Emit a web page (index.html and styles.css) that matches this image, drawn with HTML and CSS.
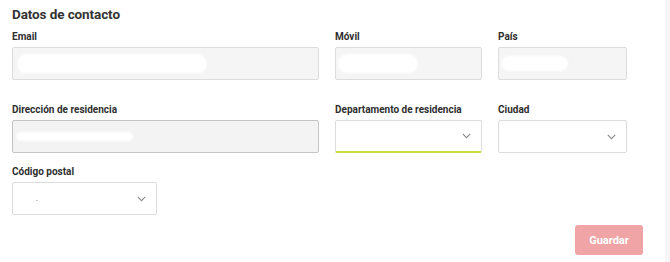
FILE: index.html
```html
<!DOCTYPE html>
<html lang="es">
<head>
<meta charset="utf-8">
<title>Datos de contacto</title>
<link rel="stylesheet" href="styles.css">
</head>
<body>
<div class="page">
  <main class="main">
    <h2 class="title">Datos de contacto</h2>
    <div class="row row1">
      <div class="field f-wide">
        <label class="label">Email</label>
        <div class="input filled"><span class="blob b-email"></span></div>
      </div>
      <div class="field f-mid">
        <label class="label">Móvil</label>
        <div class="input filled"><span class="blob b-movil"></span></div>
      </div>
      <div class="field f-small">
        <label class="label">País</label>
        <div class="input filled"><span class="blob b-pais"></span></div>
      </div>
    </div>
    <div class="row row2">
      <div class="field f-wide">
        <label class="label">Dirección de residencia</label>
        <div class="input filled dark"><span class="blob b-dir"></span></div>
      </div>
      <div class="field f-mid">
        <label class="label">Departamento de residencia</label>
        <div class="input select focus">
          <span class="sel-value"></span>
          <svg class="chev" width="9" height="6" viewBox="0 0 9 6"><path d="M0.8 0.8 L4.5 4.6 L8.2 0.8" fill="none" stroke="#8a8a8a" stroke-width="1.1"/></svg>
        </div>
      </div>
      <div class="field f-small">
        <label class="label">Ciudad</label>
        <div class="input select">
          <span class="sel-value"></span>
          <svg class="chev" width="9" height="6" viewBox="0 0 9 6"><path d="M0.8 0.8 L4.5 4.6 L8.2 0.8" fill="none" stroke="#8a8a8a" stroke-width="1.1"/></svg>
        </div>
      </div>
    </div>
    <div class="row row3">
      <div class="field f-postal">
        <label class="label">Código postal</label>
        <div class="input select">
          <span class="sel-value"><span class="dot"></span></span>
          <svg class="chev" width="9" height="6" viewBox="0 0 9 6"><path d="M0.8 0.8 L4.5 4.6 L8.2 0.8" fill="none" stroke="#8a8a8a" stroke-width="1.1"/></svg>
        </div>
      </div>
    </div>
    <div class="actions">
      <button class="btn" type="button">Guardar</button>
    </div>
  </main>
  <aside class="strip"></aside>
</div>
</body>
</html>
```
FILE: styles.css
```css
* { box-sizing: border-box; }
html, body { margin: 0; padding: 0; background: #fff; }
body { font-family: Roboto, "Liberation Sans", Arial, sans-serif; color: #333; }
.page { display: flex; width: 670px; height: 262px; }
.main { flex: 1; padding: 5px 0 0 12px; }
.strip { width: 5px; background: #f6f6f6; }
.title { margin: 0; font-size: 13.5px; line-height: 18px; font-weight: 700; color: #333; letter-spacing: -0.1px; }
.row { display: flex; gap: 16px; }
.row1 { margin-top: 8px; }
.row2 { margin-top: 24px; }
.row3 { margin-top: 13px; }
.field { display: flex; flex-direction: column; }
.f-wide { width: 307px; }
.f-mid { width: 147px; }
.f-small { width: 129px; }
.f-postal { width: 145px; }
.label { font-size: 10px; line-height: 12px; font-weight: 700; color: #2e2e2e; margin-bottom: 4px; }
.input { height: 33px; border: 1px solid #dcdcdc; border-radius: 2px; background: #fff; display: flex; align-items: center; }
.filled { background: #f5f5f5; }
.dark { border-color: #c4c4c4; background: #f3f3f3; }
.select { justify-content: space-between; padding-right: 10px; }
.focus { border-bottom: 2px solid #c9dc3a; }
.chev { display: block; }
.blob { display: block; background: #fff; border-radius: 10px; filter: blur(1px); }
.b-email { width: 189px; height: 19px; margin-left: 5px; border-radius: 10px 12px 10px 8px; }
.b-movil { width: 80px; height: 19px; margin-left: 2px; }
.b-pais { width: 67px; height: 15px; margin-left: 2px; }
.b-dir { width: 117px; height: 9px; margin-left: 3px; }
.sel-value { display: flex; align-items: center; padding-left: 23px; }
.dot { display: block; width: 2px; height: 1px; background: #c8c8c8; margin-top: 4px; }
.actions { display: flex; justify-content: flex-end; padding-right: 22px; margin-top: 10px; }
.btn { width: 68px; height: 30px; border: 0; border-radius: 3px; background: #f0a4a5; color: #fff; font-family: Roboto, "Liberation Sans", Arial, sans-serif; font-size: 11px; font-weight: 700; padding: 0; }
```
